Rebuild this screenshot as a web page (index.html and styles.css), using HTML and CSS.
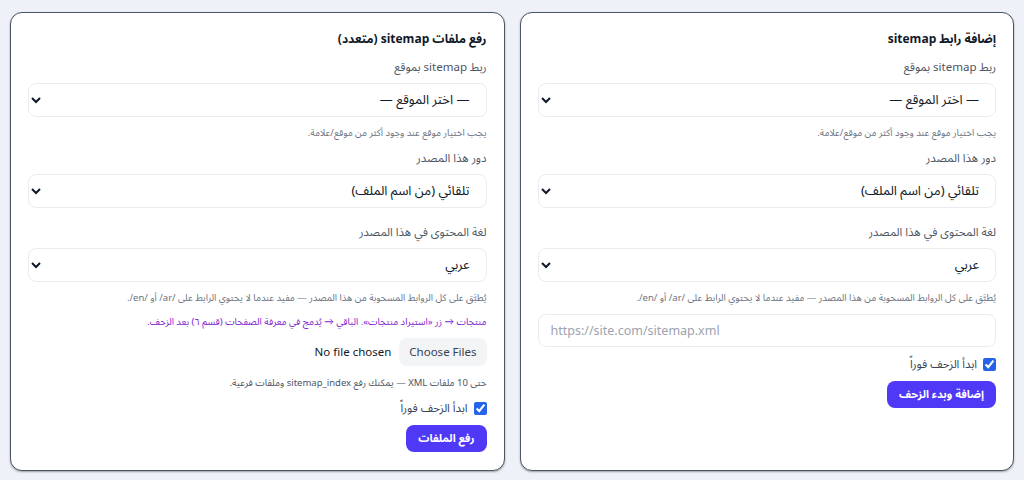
FILE: index.html
```html
<!DOCTYPE html>
<html lang="ar" dir="rtl">
<head>
    <meta charset="UTF-8">
    <meta name="viewport" content="width=device-width, initial-scale=1.0">
    <title>Sitemap</title>
    <link rel="stylesheet" href="styles.css">
</head>
<body>

    <div class="cards">
        <!-- add sitemap url -->
        <form class="card">
            <h3 class="card-title">إضافة رابط sitemap</h3>

            <div class="field">
                <label for="site1">ربط sitemap بموقع</label>
                <select id="site1" class="form-control">
                    <option>— اختر الموقع —</option>
                </select>
            </div>
            <p class="help">يجب اختيار موقع عند وجود أكثر من موقع/علامة.</p>

            <div class="field">
                <label for="role1">دور هذا المصدر</label>
                <select id="role1" class="form-control">
                    <option>تلقائي (من اسم الملف)</option>
                </select>
            </div>

            <div class="field field-spaced">
                <label for="lang1">لغة المحتوى في هذا المصدر</label>
                <select id="lang1" class="form-control">
                    <option>عربي</option>
                </select>
            </div>
            <p class="help">يُطبَّق على كل الروابط المسحوبة من هذا المصدر — مفيد عندما لا يحتوي الرابط على /ar/ أو /en/.</p>

            <input type="url" class="form-control" dir="ltr" placeholder="https://site.com/sitemap.xml">

            <label class="check">
                <input type="checkbox" checked>
                ابدأ الزحف فوراً
            </label>

            <button type="submit" class="btn btn-primary">إضافة وبدء الزحف</button>
        </form>

        <!-- upload sitemap files -->
        <form class="card">
            <h3 class="card-title">رفع ملفات sitemap (متعدد)</h3>

            <div class="field">
                <label for="site2">ربط sitemap بموقع</label>
                <select id="site2" class="form-control">
                    <option>— اختر الموقع —</option>
                </select>
            </div>
            <p class="help">يجب اختيار موقع عند وجود أكثر من موقع/علامة.</p>

            <div class="field">
                <label for="role2">دور هذا المصدر</label>
                <select id="role2" class="form-control">
                    <option>تلقائي (من اسم الملف)</option>
                </select>
            </div>

            <div class="field field-spaced">
                <label for="lang2">لغة المحتوى في هذا المصدر</label>
                <select id="lang2" class="form-control">
                    <option>عربي</option>
                </select>
            </div>
            <p class="help">يُطبَّق على كل الروابط المسحوبة من هذا المصدر — مفيد عندما لا يحتوي الرابط على /ar/ أو /en/.</p>
            <p class="help help-purple">منتجات → زر «استيراد منتجات». الباقي → يُدمج في معرفة الصفحات (قسم ٦) بعد الزحف.</p>

            <input type="file" class="file-input" multiple accept=".xml">
            <p class="help help-dark">حتى 10 ملفات XML — يمكنك رفع sitemap_index وملفات فرعية.</p>

            <label class="check">
                <input type="checkbox" checked>
                ابدأ الزحف فوراً
            </label>

            <button type="submit" class="btn btn-primary">رفع الملفات</button>
        </form>
    </div>

</body>
</html>
```

FILE: styles.css
```css
/* common */
* {
    box-sizing: border-box;
}

body {
    margin: 0;
    padding: 12px 10px 10px;
    background-color: #eef2f8;
    font-family: "Noto Sans Arabic", "Lato", "DejaVu Sans", sans-serif;
    color: #111827;
}

.cards {
    display: grid;
    grid-template-columns: 1fr 1fr;
    gap: 15px;
}

.card {
    display: flex;
    flex-direction: column;
    gap: 8px;
    min-height: 458px;
    padding: 17px 17px 18px;
    background-color: #ffffff;
    border: 1px solid #4b5563;
    border-radius: 12px;
    box-shadow: 0 1px 2px rgba(0, 0, 0, 0.35);
}

.card-title {
    margin: 0;
    font-size: 12px;
    line-height: 20px;
    font-weight: 700;
}

/* fields */
.field {
    display: flex;
    flex-direction: column;
    gap: 7px;
}

.field-spaced {
    margin-top: 7px;
}

.field label {
    font-size: 11.5px;
    line-height: 18px;
    color: #4b5563;
}

.form-control {
    width: 100%;
    height: 34px;
    padding: 0 12px;
    background-color: #ffffff;
    border: 1px solid #e9ecf1;
    border-radius: 8px;
    font-family: inherit;
    font-size: 13px;
    color: #111827;
}

input.form-control {
    height: 33px;
    font-size: 12.5px;
}

.form-control::placeholder {
    color: #9ca3af;
}

.help {
    margin: 0;
    font-size: 9.5px;
    line-height: 16px;
    color: #6b7280;
}

.help-purple {
    color: #7e22ce;
}

.help-dark {
    margin-top: 1px;
    color: #4b5563;
}

/* file input */
.file-input {
    align-self: flex-start;
    height: 28px;
    font-family: inherit;
    font-size: 11.5px;
    color: #111827;
}

.file-input::file-selector-button {
    height: 28px;
    margin-left: 8px;
    padding: 0 10px;
    border: none;
    border-radius: 8px;
    background-color: #f3f4f6;
    font-family: inherit;
    font-size: 11.5px;
    color: #374151;
}

/* checkbox */
.check {
    display: flex;
    align-items: center;
    gap: 6px;
    font-size: 11.5px;
    line-height: 18px;
    color: #374151;
}

.check input {
    margin: 0;
    width: 13px;
    height: 13px;
    accent-color: #2563eb;
}

/* button */
.btn {
    align-self: flex-start;
    height: 27px;
    padding: 0 12px;
    border: none;
    border-radius: 8px;
    font-family: inherit;
    font-size: 11px;
    font-weight: 700;
    cursor: pointer;
}

.btn-primary {
    background-color: #4f39f6;
    color: #ffffff;
}
```
